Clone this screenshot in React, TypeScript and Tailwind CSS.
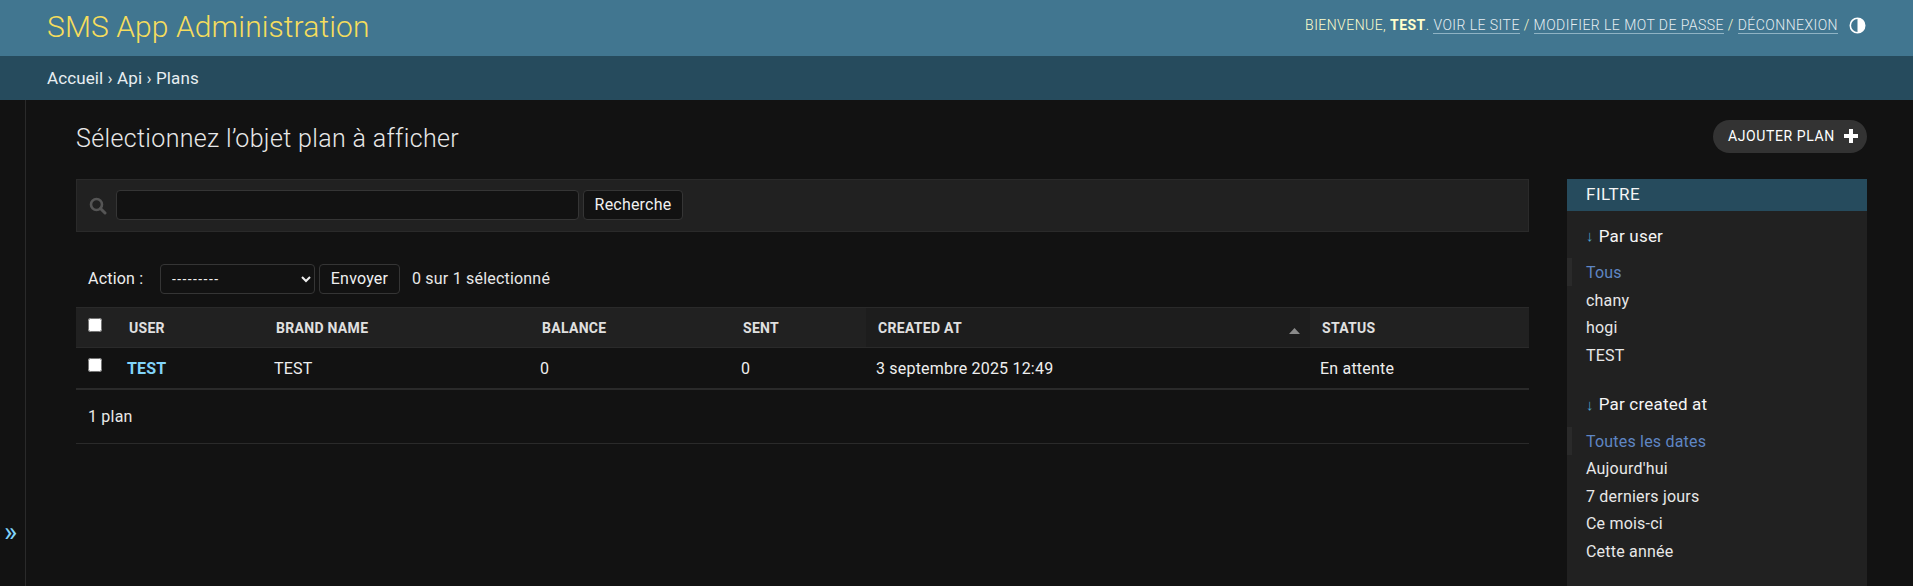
import React from 'react';

const userFilters = ['chany', 'hogi', 'TEST'];
const dateFilters = ["Aujourd'hui", '7 derniers jours', 'Ce mois-ci', 'Cette année'];

const columns = [
  { label: 'USER', width: 'w-[147px]' },
  { label: 'BRAND NAME', width: 'w-[266px]' },
  { label: 'BALANCE', width: 'w-[201px]' },
  { label: 'SENT', width: 'w-[135px]' },
];

const FilterGroup: React.FC<{ title: string; selected: string; items: string[] }> = ({ title, selected, items }) => (
  <div className="mb-[24px]">
    <div className="h-[25px] pl-[19px] flex items-center text-[17px] text-[#f5f5f5]">
      <span className="text-[#4fa3cc] mr-[5px] text-[15px]">↓</span>
      {title}
    </div>
    <ul className="mt-[9px]">
      <li className="h-[28px] pl-[14px] pt-[2px] border-l-[5px] border-[#2a2a2a] flex items-center text-[#5f86c4]">{selected}</li>
      {items.map((item) => (
        <li key={item} className="h-[27.5px] pl-[19px] pt-[2px] flex items-center text-[#e8e8e8]">{item}</li>
      ))}
    </ul>
  </div>
);

export default function App() {
  return (
    <div className="h-[586px] overflow-hidden flex flex-col bg-[#121212] text-[16px] tracking-[0.2px] text-[#eeeeee] font-['Roboto',sans-serif]">
      <header className="h-[56px] shrink-0 bg-[#417690] pl-[47px] pr-[47px] flex items-center justify-between">
        <h1 className="pb-[3px] text-[30px] font-light text-[#f5dd5d] tracking-[0.1px]">SMS App Administration</h1>
        <div className="pb-[6px] flex items-center text-[14px] font-light text-[#ffffcc] tracking-[0.45px]">
          <span>
            BIENVENUE, <strong className="font-bold">TEST</strong>.{' '}
            <a className="border-b border-[#8fb3c4] text-[#e6eef2]">VOIR LE SITE</a> /{' '}
            <a className="border-b border-[#8fb3c4] text-[#e6eef2]">MODIFIER LE MOT DE PASSE</a> /{' '}
            <a className="border-b border-[#8fb3c4] text-[#e6eef2]">DÉCONNEXION</a>
          </span>
          <svg className="ml-[11px]" width="17" height="17" viewBox="0 0 17 17">
            <circle cx="8.5" cy="8.5" r="7.2" fill="none" stroke="#ffffff" strokeWidth="1.6" />
            <path d="M8.5 1.3a7.2 7.2 0 0 1 0 14.4z" fill="#ffffff" />
          </svg>
        </div>
      </header>

      <nav className="h-[44px] shrink-0 bg-[#264b5d] pl-[47px] pt-[2px] flex items-center text-[17px] tracking-[0.1px] text-[#e8eef1]">
        Accueil › Api › Plans
      </nav>

      <div className="flex-1 min-h-0 flex">
        <div className="w-[26px] shrink-0 border-r border-[#2a2a2a] flex items-end pb-[41px] pl-[4px]">
          <span className="text-[28px] leading-[26px] text-[#81d4fa]">»</span>
        </div>

        <main className="flex-1 min-w-0 pl-[50px] pr-[46px] pt-[20px] flex flex-col">
          <div className="h-[33px] mb-[26px] flex items-center justify-between">
            <h2 className="pt-[5px] text-[25px] font-light text-[#e8e8e8] tracking-[0.35px]">Sélectionnez l’objet plan à afficher</h2>
            <a className="h-[33px] w-[154px] pl-[15px] rounded-full bg-[#333333] flex items-center gap-[9px] text-[14px] text-white tracking-[0.6px]">
              AJOUTER PLAN
              <svg className="-mt-[1px]" width="14" height="14" viewBox="0 0 14 14">
                <path d="M5 0h4v5h5v4H9v5H5V9H0V5h5z" fill="#ffffff" />
              </svg>
            </a>
          </div>

          <div className="flex-1 min-h-0 flex gap-[38px]">
            <section className="flex-1 min-w-0">
              <div className="h-[53px] bg-[#212121] border border-[#2a2a2a] pl-[12px] flex items-center">
                <svg className="mr-[9px]" width="18" height="18" viewBox="0 0 18 18">
                  <circle cx="7.5" cy="7.5" r="5.5" fill="none" stroke="#555555" strokeWidth="2.6" />
                  <path d="M11.5 11.5 16 16" stroke="#555555" strokeWidth="3" strokeLinecap="round" />
                </svg>
                <input className="w-[463px] h-[30px] -mt-[1px] bg-[#121212] border border-[#353535] rounded-[4px] outline-none" />
                <button className="ml-[4px] w-[100px] h-[30px] -mt-[1px] bg-[#121212] border border-[#353535] rounded-[4px] text-[#f0f0f0]">Recherche</button>
              </div>

              <div className="mt-[32px] h-[30px] pl-[12px] flex items-center">
                <span className="w-[72px]">Action :</span>
                <select className="w-[155px] h-[30px] pl-[7px] bg-[#121212] border border-[#353535] rounded-[4px] text-[14px] tracking-[1.4px] [color-scheme:dark]">
                  <option>---------</option>
                </select>
                <button className="ml-[4px] w-[81px] h-[30px] bg-[#121212] border border-[#353535] rounded-[4px] text-[#f0f0f0]">Envoyer</button>
                <span className="ml-[12px] text-[#e8e8e8]">0 sur 1 sélectionné</span>
              </div>

              <table className="mt-[13px] w-full table-fixed border-collapse">
                <thead>
                  <tr className="h-[40px] bg-[#212121] border-t border-b border-[#2a2a2a]">
                    <th className="w-[41px] pl-[12px] text-left">
                      <input type="checkbox" className="block w-[14px] h-[14px] -mt-[6px]" />
                    </th>
                    {columns.map((col) => (
                      <th key={col.label} className={`${col.width} pl-[12px] pt-[2px] text-left text-[14px] font-bold tracking-[0.3px] text-[#e0e0e0]`}>{col.label}</th>
                    ))}
                    <th className="w-[444px] pl-[12px] pr-[10px] pt-[2px] bg-[#1d1d1d] text-[14px] font-bold tracking-[0.3px] text-[#e0e0e0]">
                      <div className="flex items-center justify-between">
                        <span>CREATED AT</span>
                        <svg className="mt-[4px]" width="11" height="6" viewBox="0 0 11 6">
                          <path d="M5.5 0 11 6H0z" fill="#8a8a8a" />
                        </svg>
                      </div>
                    </th>
                    <th className="pl-[12px] pt-[2px] text-left text-[14px] font-bold tracking-[0.3px] text-[#e0e0e0]">STATUS</th>
                  </tr>
                </thead>
                <tbody>
                  <tr className="h-[41px] border-b-2 border-[#2a2a2a]">
                    <td className="pl-[12px]">
                      <input type="checkbox" className="block w-[14px] h-[14px] -mt-[6px]" />
                    </td>
                    <td className="pl-[10px] pt-[2px] font-bold text-[#81d4fa]">TEST</td>
                    <td className="pl-[10px] pt-[2px]">TEST</td>
                    <td className="pl-[10px] pt-[2px]">0</td>
                    <td className="pl-[10px] pt-[2px]">0</td>
                    <td className="pl-[10px] pt-[2px]">3 septembre 2025 12:49</td>
                    <td className="pl-[10px] pt-[2px]">En attente</td>
                  </tr>
                </tbody>
              </table>

              <div className="h-[54px] pl-[12px] pt-[2px] flex items-center border-b border-[#2a2a2a] text-[#e8e8e8]">1 plan</div>
            </section>

            <aside className="w-[300px] shrink-0 bg-[#212121]">
              <div className="h-[32px] pl-[19px] bg-[#264b5d] flex items-center text-[17px] tracking-[0.5px] text-[#f5f5f5]">FILTRE</div>
              <div className="pt-[13px]">
                <FilterGroup title="Par user" selected="Tous" items={userFilters} />
                <FilterGroup title="Par created at" selected="Toutes les dates" items={dateFilters} />
              </div>
            </aside>
          </div>
        </main>
      </div>
    </div>
  );
}
